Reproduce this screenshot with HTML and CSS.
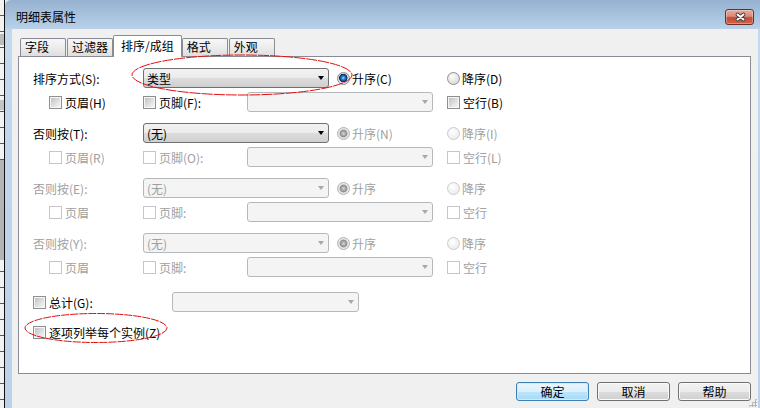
FILE: index.html
```html
<!DOCTYPE html>
<html lang="zh-CN">
<head>
    <meta charset="UTF-8">
    <meta name="viewport" content="width=device-width, initial-scale=1.0">
    <title>明细表属性</title>
    <link rel="stylesheet" href="styles.css">
</head>
<body>
    <div class="screen">
        <div class="backdrop"></div>

        <div class="window">
            <div class="titlebar">
                <span class="title">明细表属性</span>
                <span class="close-btn">
                    <svg width="27" height="14" viewBox="0 0 27 14">
                        <path d="M11.5 4.5 L17.5 9.5 M17.5 4.5 L11.5 9.5" stroke="#3a3a3a" stroke-width="3.8" stroke-linecap="round" fill="none"/>
                        <path d="M11.5 4.5 L17.5 9.5 M17.5 4.5 L11.5 9.5" stroke="#ffffff" stroke-width="2" stroke-linecap="round" fill="none"/>
                    </svg>
                </span>
            </div>

            <div class="client">
                <!-- タブ -->
                <div class="tabs">
                    <div class="tab">字段</div>
                    <div class="tab">过滤器</div>
                    <div class="tab active">排序/成组</div>
                    <div class="tab">格式</div>
                    <div class="tab">外观</div>
                </div>

                <div class="panel">
                    <div class="groups">
                        <!-- 排序方式 -->
                        <div class="sort-group">
                            <div class="row">
                                <span class="field-label">排序方式(S):</span>
                                <div class="combo"><span>类型</span><span class="arrow"></span></div>
                                <label class="option"><span class="radio on"></span>升序(C)</label>
                                <label class="option"><span class="radio"></span>降序(D)</label>
                            </div>
                            <div class="row sub">
                                <label class="check header"><span class="box"></span>页眉(H)</label>
                                <label class="check footer"><span class="box"></span>页脚(F):</label>
                                <div class="combo disabled"><span></span><span class="arrow"></span></div>
                                <label class="check blank"><span class="box"></span>空行(B)</label>
                            </div>
                        </div>

                        <!-- 否则按 (T) -->
                        <div class="sort-group">
                            <div class="row">
                                <span class="field-label">否则按(T):</span>
                                <div class="combo"><span>(无)</span><span class="arrow"></span></div>
                                <label class="option disabled"><span class="radio on"></span>升序(N)</label>
                                <label class="option disabled"><span class="radio"></span>降序(I)</label>
                            </div>
                            <div class="row sub">
                                <label class="check header disabled"><span class="box"></span>页眉(R)</label>
                                <label class="check footer disabled"><span class="box"></span>页脚(O):</label>
                                <div class="combo disabled"><span></span><span class="arrow"></span></div>
                                <label class="check blank disabled"><span class="box"></span>空行(L)</label>
                            </div>
                        </div>

                        <!-- 否则按 (E) -->
                        <div class="sort-group">
                            <div class="row">
                                <span class="field-label disabled">否则按(E):</span>
                                <div class="combo disabled"><span>(无)</span><span class="arrow"></span></div>
                                <label class="option disabled"><span class="radio on"></span>升序</label>
                                <label class="option disabled"><span class="radio"></span>降序</label>
                            </div>
                            <div class="row sub">
                                <label class="check header disabled"><span class="box"></span>页眉</label>
                                <label class="check footer disabled"><span class="box"></span>页脚:</label>
                                <div class="combo disabled"><span></span><span class="arrow"></span></div>
                                <label class="check blank disabled"><span class="box"></span>空行</label>
                            </div>
                        </div>

                        <!-- 否则按 (Y) -->
                        <div class="sort-group">
                            <div class="row">
                                <span class="field-label disabled">否则按(Y):</span>
                                <div class="combo disabled"><span>(无)</span><span class="arrow"></span></div>
                                <label class="option disabled"><span class="radio on"></span>升序</label>
                                <label class="option disabled"><span class="radio"></span>降序</label>
                            </div>
                            <div class="row sub">
                                <label class="check header disabled"><span class="box"></span>页眉</label>
                                <label class="check footer disabled"><span class="box"></span>页脚:</label>
                                <div class="combo disabled"><span></span><span class="arrow"></span></div>
                                <label class="check blank disabled"><span class="box"></span>空行</label>
                            </div>
                        </div>
                    </div>

                    <div class="row totals">
                        <label class="check total"><span class="box"></span>总计(G):</label>
                        <div class="combo disabled total-combo"><span></span><span class="arrow"></span></div>
                    </div>

                    <div class="row itemize">
                        <label class="check"><span class="box"></span>逐项列举每个实例(Z)</label>
                    </div>
                </div>

                <div class="actions">
                    <button class="btn default">确定</button>
                    <button class="btn">取消</button>
                    <button class="btn">帮助</button>
                </div>
            </div>
        </div>

        <!-- 赤い注釈の丸 -->
        <svg class="marks" width="760" height="408" viewBox="0 0 760 408">
            <ellipse cx="242" cy="75" rx="110" ry="20" fill="none" stroke="#e01010" stroke-width="1" stroke-dasharray="11 1"/>
            <ellipse cx="96" cy="328" rx="71" ry="14.5" fill="none" stroke="#e01010" stroke-width="1" stroke-dasharray="8 1"/>
        </svg>

        <span class="grip"></span>
    </div>
</body>
</html>
```

FILE: styles.css
```css
body {
    margin: 0;
    font-family: "Noto Sans CJK SC", "Microsoft YaHei", sans-serif;
    font-size: 12px;
    color: #000;
}

.screen {
    position: relative;
    display: flex;
    width: 760px;
    height: 408px;
    overflow: hidden;
    background: #e8e8e8;
}

.backdrop {
    width: 4px;
    border-right: 1px solid #111;
    background:
        linear-gradient(#bcbcbc, #bcbcbc) 0 34px / 4px 11px no-repeat,
        linear-gradient(#c4c4c4, #c4c4c4) 0 100px / 4px 10px no-repeat,
        linear-gradient(#b4b4b4, #b4b4b4) 0 160px / 4px 100px no-repeat,
        repeating-linear-gradient(transparent 0 15px, #5a5a5a 15px 16px),
        #f2f2f2;
}

/* ウィンドウ枠 */
.window {
    flex: 1;
    display: flex;
    flex-direction: column;
    background: linear-gradient(#c4d8ee, #bcd2ea);
    border-top-left-radius: 6px;
}

.titlebar {
    height: 29px;
    box-sizing: border-box;
    display: flex;
    align-items: flex-start;
    padding: 9px 6px 0 11px;
    background: linear-gradient(#96b2d0, #b9d1ea);
    border-top-left-radius: 6px;
}

.title {
    line-height: 16px;
}

.close-btn {
    margin-left: auto;
    display: flex;
    width: 29px;
    height: 16px;
    box-sizing: border-box;
    border: 1px solid #6b2f27;
    border-radius: 3px;
    background: linear-gradient(#e8aa9a, #d98b78 45%, #c44a35 55%, #cf6648);
    box-shadow: inset 0 0 0 1px rgba(255, 255, 255, 0.3);
}

.client {
    flex: 1;
    margin: 0 2px 0 7px;
    padding: 6px 7px 0 6px;
    background: #f0f0f0;
}

/* タブ */
.tabs {
    display: flex;
    align-items: flex-end;
    height: 21px;
    padding-left: 2px;
}

.tab {
    min-width: 46px;
    height: 18px;
    box-sizing: border-box;
    padding: 0 4px;
    margin-right: 1px;
    border: 1px solid #898c95;
    border-bottom: none;
    border-radius: 2px 2px 0 0;
    background: linear-gradient(#f7f7f7, #ececec 50%, #dedede);
    line-height: 16px;
}

.tab.active {
    position: relative;
    z-index: 1;
    height: 22px;
    margin: 0 0 -1px -1px;
    padding: 0 7px;
    background: #fff;
    line-height: 19px;
}

.panel {
    height: 318px;
    box-sizing: border-box;
    padding: 11px 0 0 14px;
    border: 1px solid #898c95;
    background: #fff;
}

.groups {
    display: flex;
    flex-direction: column;
    gap: 11px;
}

.sort-group {
    display: flex;
    flex-direction: column;
    gap: 4px;
}

.row {
    display: flex;
    align-items: center;
    height: 20px;
}

.row.sub {
    padding-left: 16px;
}

.field-label {
    width: 110px;
}

.disabled {
    color: #a0a0a0;
}

/* コンボボックス */
.combo {
    display: flex;
    align-items: center;
    justify-content: space-between;
    width: 186px;
    height: 20px;
    box-sizing: border-box;
    padding: 0 4px 0 3px;
    border: 1px solid #707070;
    border-radius: 3px;
    background: linear-gradient(#f2f2f2, #ebebeb 50%, #dddddd 50%, #cfcfcf);
}

.combo.disabled {
    border-color: #b5b9bc;
    background: #f4f4f4;
}

.total-combo {
    width: 187px;
}

.arrow {
    width: 0;
    height: 0;
    border-left: 3.5px solid transparent;
    border-right: 3.5px solid transparent;
    border-top: 4px solid #000;
}

.combo.disabled .arrow {
    border-top-color: #a8a8a8;
}

/* ラジオボタン */
.option {
    display: flex;
    align-items: center;
    gap: 2px;
    width: 110px;
}

.combo + .option {
    margin-left: 8px;
}

.radio {
    width: 13px;
    height: 13px;
    box-sizing: border-box;
    border: 1px solid #8e8f8f;
    border-radius: 50%;
    background: radial-gradient(circle at 40% 35%, #fdfdfd, #e2e2e2 60%, #cdcdcd);
}

.radio.on {
    background: radial-gradient(circle at 48% 45%, #a6e4ff 0, #2f8ee3 1.5px, #0f4c96 3px, #1c2c42 3.9px, #d8d8d8 4.5px, #f6f6f6);
}

.option.disabled .radio {
    border-color: #cbcbcb;
    background: radial-gradient(circle at 40% 35%, #ffffff, #eeeeee 70%, #e4e4e4);
}

.option.disabled .radio.on {
    border-color: #b2b2b2;
    background: radial-gradient(circle, #d6d6d6 0, #a9a9a9 2px, #8d8d8d 3.4px, #e2e2e2 4.3px, #f6f6f6);
}

/* チェックボックス */
.check {
    display: flex;
    align-items: center;
    gap: 3px;
}

.check.header {
    width: 94px;
}

.check.footer {
    width: 104px;
}

.check.blank {
    margin-left: 14px;
}

.check.total {
    width: 139px;
}

.box {
    width: 13px;
    height: 13px;
    box-sizing: border-box;
    border: 1px solid #8e8f8f;
    background: linear-gradient(135deg, #b8bcc0, #e6e6e6 65%, #f9f9f9);
    box-shadow: inset 0 0 0 1px #f6f6f6;
}

.check.disabled .box {
    border-color: #c6c6c6;
    background: #fff;
    box-shadow: none;
}

.totals {
    margin-top: 15px;
}

.itemize {
    margin-top: 10px;
}

/* ボタン */
.actions {
    display: flex;
    justify-content: flex-end;
    gap: 8px;
    margin-top: 8px;
}

.btn {
    width: 73px;
    height: 19px;
    box-sizing: border-box;
    padding: 0;
    border: 1px solid #707070;
    border-radius: 3px;
    font-family: inherit;
    font-size: 12px;
    line-height: 16px;
    color: #000;
    background: linear-gradient(#f2f2f2, #ebebeb 50%, #dddddd 50%, #cfcfcf);
    box-shadow: inset 0 0 0 1px #fbfbfb;
}

.btn.default {
    border-color: #3c7fb1;
    background: linear-gradient(#eaf6fd, #d9f0fc 50%, #bee6fd 50%, #a7d9f5);
    box-shadow: inset 0 0 0 1px #cdeefd;
}

.marks {
    position: absolute;
    left: 0;
    top: 0;
    pointer-events: none;
}

.grip {
    position: absolute;
    right: 3px;
    bottom: 1px;
    width: 9px;
    height: 9px;
    background: radial-gradient(circle, #a4a4a4 0.9px, transparent 1.3px) 0 0 / 3px 3px;
    clip-path: polygon(100% 0, 100% 100%, 0 100%);
}
```
